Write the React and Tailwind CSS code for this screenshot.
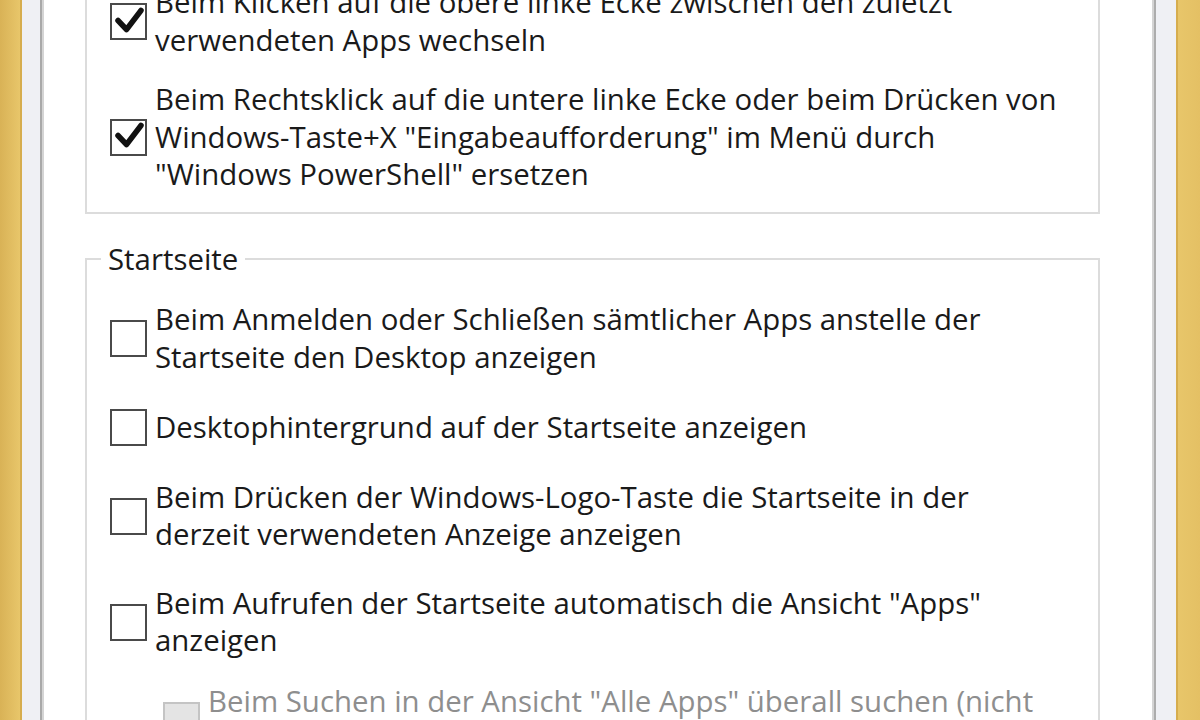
import React from "react";

const font = { fontFamily: '"Open Sans", "Noto Sans", sans-serif' };

function Box({ checked, disabled }) {
  if (disabled) {
    return (
      <div className="w-[37px] h-[37px] shrink-0 border-2 border-[#c4c4c4] bg-[#e4e4e4]" />
    );
  }
  return (
    <div className="w-[37px] h-[37px] shrink-0 border-[2.5px] border-[#4a4a4a] bg-white relative">
      {checked && (
        <svg viewBox="0 0 37 37" className="absolute -left-[2.5px] -top-[2.5px] w-[37px] h-[37px]">
          <path
            d="M8 17.5 L16.5 26.5 L31 7.5"
            fill="none"
            stroke="#111"
            strokeWidth="5.5"
            strokeLinecap="round"
            strokeLinejoin="round"
          />
        </svg>
      )}
    </div>
  );
}

function Row({ lines, checked, disabled, className = "" }) {
  return (
    <div className={"flex items-center gap-[8px] " + className}>
      <Box checked={checked} disabled={disabled} />
      <div className={"text-[29.4px] leading-[37.5px] " + (disabled ? "text-[#8e8e8e]" : "text-[#1a1a1a]")}>
        {lines.map((l, i) => (
          <div key={i} className="whitespace-nowrap">{l}</div>
        ))}
      </div>
    </div>
  );
}

export default function App() {
  return (
    <div className="w-[1200px] h-[720px] overflow-hidden flex bg-white" style={font}>
      {/* left frame */}
      <div className="w-[20px] shrink-0 bg-gradient-to-r from-[#d9b256] to-[#e8c66a]" />
      <div className="w-[2px] shrink-0 bg-[#d6ad4e]" />
      <div className="w-[18px] shrink-0 bg-[#eff0f4]" />
      <div className="w-[2px] shrink-0 bg-[#a9a9a9]" />
      <div className="w-[2px] shrink-0 bg-[#d4d4d4]" />

      {/* content */}
      <div className="flex-1 bg-white pl-[41px] pr-[52px] flex flex-col">
        <div className="mt-[-40px] border-2 border-[#dcdcdc] pl-[23px] pt-[22px] pb-[18px] flex flex-col gap-[22px]">
          <Row
            checked
            lines={[
              "Beim Klicken auf die obere linke Ecke zwischen den zuletzt",
              "verwendeten Apps wechseln",
            ]}
          />
          <Row
            checked
            lines={[
              "Beim Rechtsklick auf die untere linke Ecke oder beim Drücken von",
              'Windows-Taste+X "Eingabeaufforderung" im Menü durch',
              '"Windows PowerShell" ersetzen',
            ]}
          />
        </div>

        <fieldset className="mt-[27px] border-2 border-[#dcdcdc] pb-[30px]">
          <legend className="ml-[14px] px-[7px] text-[29.4px] leading-[37.5px] text-[#1a1a1a]">
            Startseite
          </legend>
          <div className="pl-[23px] pt-[23px] flex flex-col">
            <Row
              lines={[
                "Beim Anmelden oder Schließen sämtlicher Apps anstelle der",
                "Startseite den Desktop anzeigen",
              ]}
            />
            <Row className="mt-[33px]" lines={["Desktophintergrund auf der Startseite anzeigen"]} />
            <Row
              className="mt-[32px]"
              lines={[
                "Beim Drücken der Windows-Logo-Taste die Startseite in der",
                "derzeit verwendeten Anzeige anzeigen",
              ]}
            />
            <Row
              className="mt-[31px]"
              lines={[
                'Beim Aufrufen der Startseite automatisch die Ansicht "Apps"',
                "anzeigen",
              ]}
            />
            <Row
              disabled
              className="mt-[23px] ml-[53px] gap-[7px]"
              lines={[
                'Beim Suchen in der Ansicht "Alle Apps" überall suchen (nicht',
                "nur in meinen Apps)",
              ]}
            />
          </div>
        </fieldset>
      </div>

      {/* right frame */}
      <div className="w-[2px] shrink-0 bg-[#d4d4d4]" />
      <div className="w-[2px] shrink-0 bg-[#acacac]" />
      <div className="w-[20px] shrink-0 bg-[#eff0f4]" />
      <div className="w-[2px] shrink-0 bg-[#d6ad4e]" />
      <div className="w-[22px] shrink-0 bg-gradient-to-r from-[#e8c66a] to-[#e4c064]" />
    </div>
  );
}
